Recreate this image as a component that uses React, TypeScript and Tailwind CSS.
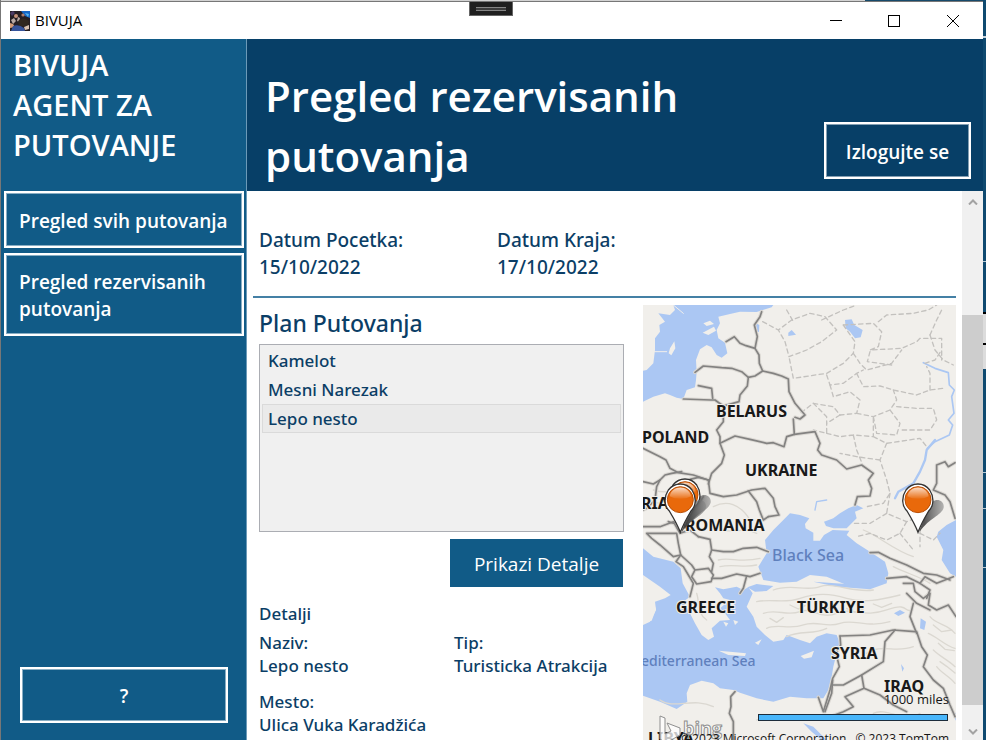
import { useState } from "react";

const stops = ["Kamelot", "Mesni Narezak", "Lepo nesto"];

const borders = [
  "M365 35L360 50 343 75 352 110 345 145 357 165 358 190 368 213",
  "M258 125L283 110 300 130 318 137 345 145",
  "M165 217L190 198 245 203 275 205 305 215 325 232 345 228 368 213 400 220 425 228 445 237 447 275 465 310 495 345 480 357 465 352",
  "M325 232L322 258 300 285 297 305 250 318 225 300 213 300 130 297",
  "M175 257L215 265 218 295",
  "M250 320L250 365 230 390 240 410 240 430 285 408 330 418 380 430 400 428 432 440 440 410 463 403 460 357",
  "M463 403L525 395 540 430 533 450 545 465 590 480 620 507 665 495 700 520 685 540 695 565 690 588 652 590 645 615",
  "M240 430L253 465 245 490 215 520 205 552",
  "M9 445L60 470 78 480 90 505 115 518 160 525 205 540",
  "M9 545L40 552 60 540 75 525 95 520 125 515",
  "M60 540L50 560 45 600 20 625 9 630",
  "M205 540L210 580 250 590 290 585 335 570 375 565 400 595 405 620 417 645 385 650",
  "M325 573L350 605 358 630 370 660 385 650",
  "M190 590L170 620 150 645 100 670 85 665",
  "M205 540L175 532 150 538",
  "M20 700L110 700 115 730 122 765 100 770 60 735 35 715Z",
  "M9 680L60 680 100 665 120 700 150 690 175 710",
  "M175 710L210 718 215 750 250 755 280 755 310 745 350 742 385 755",
  "M215 750L208 770 220 790 215 815",
  "M122 765L155 795 165 810 205 805 220 825 213 845 170 852 155 830 165 810",
  "M122 765L108 785 130 800 145 825 160 850 150 890",
  "M215 835L245 835 290 822 330 830 360 820",
  "M320 828L310 865 300 880",
  "M690 758L715 757 750 775 800 795 850 820 890 825 930 840",
  "M740 835L800 830 840 850 870 870 860 895",
  "M840 850L855 830 890 850 915 840 940 830",
  "M945 488L925 500 915 485 890 495 890 550 880 570 915 585 930 605 945 655",
  "M790 850L820 850 825 875 850 895 870 880 865 915 890 930 925 915 948 950",
  "M800 880L830 910 870 930",
  "M820 910L810 950 830 1000",
  "M600 1008L690 1005 760 990 825 995",
  "M765 990L735 1025 730 1085 665 1125 610 1155 580 1155",
  "M830 995L845 1040 862 1065 850 1100 880 1140 910 1165 930 1215 945 1250",
  "M665 1125L672 1165 615 1190 640 1220 610 1235 570 1250",
  "M672 1165L720 1185 760 1215 800 1235",
  "M600 1008L602 1035 588 1060 598 1100 578 1135 570 1170 550 1235 535 1192",
  "M578 1140L575 1180 555 1235",
  "M285 1175L272 1190 273 1220 268 1240 280 1265 280 1320",
];

const regions = [
  "M368 65L415 90 455 60 510 40 555 50 590 90 545 125 500 150 447 170 435 125 415 90",
  "M440 30L460 65M545 60L610 30 650 15M610 75L700 70 725 95 715 140 690 150 785 145 830 125 840 115 905 115 905 180",
  "M610 75L645 125 640 160 610 190 560 220 460 235 447 170",
  "M715 65L740 45 820 40 865 30 890 15M870 105L890 60 905 30",
  "M640 160L660 190 680 210 755 190 785 150M690 155L682 185 755 195",
  "M560 225L570 255 610 250 650 220 670 210M650 220L670 260 720 258 760 270 830 285 870 270 910 265",
  "M855 190L885 180 905 150M870 105L885 150 910 180 940 195M870 270L870 220 860 200",
  "M570 255L580 290 630 275 660 300 650 340 600 345 580 320 520 310 480 340",
  "M520 310L560 350 560 400 520 390M600 345L560 370M650 340L700 350 750 330 770 300 760 270",
  "M700 350L710 400 770 405 780 370 750 330M770 320L830 325 880 325 890 360 870 390 780 390",
  "M560 400L600 410 640 405 700 410 700 350M640 405L650 450 670 500M700 410L740 430 840 415 860 440",
  "M740 430L720 480 740 540 750 580 730 610 680 620M720 480L650 470 600 460",
  "M750 580L740 640 800 665 840 650 840 740M740 640L690 670 640 670",
  "M800 665L780 700 740 720 690 700 650 710M840 700L880 720 900 700M780 700L820 750",
];

const ridges = [
  "M370 940C410 925 440 950 480 935S540 960 590 940 670 955 740 930 790 940 815 930",
  "M350 905C400 895 430 912 480 895S570 880 620 895 720 900 780 885",
  "M380 985C410 970 450 990 490 975S560 985 600 970 680 985 750 965",
  "M440 1010C480 990 520 1005 560 985",
  "M400 870C450 850 500 875 540 860S640 880 700 870",
  "M390 955l20 12 20-14M450 915l25 12 20-10M540 915l20 12 30-12M620 925l25 12 25-10M700 912l25 10 30-12",
  "M870 950C890 975 920 970 945 1000M865 1000C890 1010 920 1040 945 1045M880 1050C900 1070 925 1080 945 1100M890 1100C905 1120 930 1130 945 1150",
  "M880 975l25 20 30-5M895 1030l20 18 28 4M900 1085l20 14 25 20",
  "M235 780C270 770 300 790 360 775M240 800C280 790 310 805 350 795M220 620C260 600 300 610 330 660M240 690C280 700 310 680 350 700",
  "M30 600C60 620 90 600 120 640M40 570C70 580 95 575 130 570M760 800C800 820 840 830 870 850M670 690C720 710 760 750 820 770",
  "M170 880C180 910 170 940 200 960M60 1200C100 1230 160 1190 220 1220M350 1260C420 1230 500 1270 560 1250",
  "M680 1060C720 1030 770 1060 820 1040M700 1240C740 1220 790 1270 840 1240",
];

function Pin({ x, y }: { x: number; y: number }) {
  return (
    <g transform={`translate(${x} ${y})`}>
      <path d="M5 -8C20 -45 32 -70 44 -92C60 -104 80 -92 77 -74C70 -50 36 -45 5 -2Z" fill="url(#pinShadow)" />
      <path
        d="M0 0C-8 -22 -18 -39 -33 -64C-49 -79 -50 -106 -36 -127C-17 -151 17 -151 35 -127C49 -106 48 -79 32 -64C17 -39 8 -22 0 0Z"
        fill="#fff"
        stroke="#333"
        strokeWidth="4"
      />
      <circle cx="0" cy="-98" r="39" fill="#e9690b" stroke="#b94e06" strokeWidth="3" />
      <path d="M-32 -108C-26 -143 26 -143 32 -108C16 -98 -16 -98 -32 -108Z" fill="url(#pinGloss)" />
    </g>
  );
}

function TripMap() {
  return (
    <svg
      viewBox="0 0 313 435"
      preserveAspectRatio="xMinYMin slice"
      className="block h-full w-full"
      role="img"
      aria-label="Mapa putovanja"
    >
      <defs>
        <linearGradient id="pinGloss" x1="0" y1="0" x2="0" y2="1">
          <stop offset="0" stopColor="#fff" stopOpacity="0.75" />
          <stop offset="1" stopColor="#fff" stopOpacity="0.05" />
        </linearGradient>
        <linearGradient id="pinShadow" x1="0" y1="0" x2="1" y2="0">
          <stop offset="0.2" stopColor="#444" stopOpacity="0.9" />
          <stop offset="1" stopColor="#888" stopOpacity="0.6" />
        </linearGradient>
      </defs>
      <rect width="313" height="435" fill="#f1efeb" />
      <g transform="scale(0.33333) translate(-9 -15)" strokeLinejoin="round" strokeLinecap="round" fill="none">
        <g fill="#abc7f3">
          <path d="M100 15L105 30 90 45 55 40 75 65 58 75 60 95 45 115 45 150 40 190 20 210 9 212 9 305 40 290 75 280 90 285 110 293 130 297 140 270 165 262 168 240 170 215 168 180 180 148 200 135 215 142 230 165 245 173 262 160 255 128 235 115 230 90 240 70 235 50 270 42 300 35 350 36 395 22 400 15Z" />
          <path d="M348 70L358 75 357 95 348 98Z" />
          <path d="M615 60L635 58 643 75 668 90 662 112 645 115 630 95 617 85Z" />
          <path d="M445 98L455 90 468 104 445 108Z" />
          <path d="M375 720L400 690 430 660 450 640 480 645 508 655 495 672 497 685 520 698 520 722 540 722 552 705 578 690 628 692 620 705 650 730 690 755 735 785 745 820 740 850 690 860 620 855 560 830 510 825 470 845 420 848 370 840 355 800 380 760Z" />
          <path d="M552 665L580 655 600 640 625 625 650 615 670 625 645 635 650 655 620 685 580 685 558 678Z" />
          <path d="M948 660L920 675 895 695 890 710 910 750 905 780 930 820 948 830Z" />
          <path d="M9 745L40 770 100 785 122 805 128 850 150 890 130 905 150 940 165 970 185 1005 205 1020 222 1010 215 985 240 962 270 960 255 940 240 925 270 900 250 895 240 880 225 862 250 868 290 860 310 870 325 862 338 880 320 920 340 950 350 980 375 1005 400 1025 430 1020 440 1005 480 1020 510 1030 530 1010 560 1000 590 1005 600 1030 590 1060 580 1100 575 1130 565 1170 550 1195 535 1195 500 1195 450 1190 400 1205 350 1195 300 1178 280 1170 240 1165 220 1150 185 1142 150 1155 140 1180 142 1205 110 1227 60 1205 9 1187 9 975 30 965 48 930 45 905 75 895 92 885 60 860 9 825Z" />
          <path d="M322 862L350 852 400 858 380 873 345 875ZM520 845L620 852 740 850 690 868 590 860Z" />
          <path d="M762 940L780 930 795 938 775 948ZM842 955L858 965 853 990 840 985ZM783 1092L792 1105 787 1115ZM930 1228L948 1240 948 1262ZM490 1270L520 1280 560 1320 545 1320 515 1295Z" />
        </g>
        <g fill="#f1efeb">
          <path d="M190 70L210 62 222 72 200 78ZM188 98L222 80 228 92 205 105ZM90 145L103 124 106 145 94 166 86 160Z" />
          <path d="M236 1052L270 1055 318 1060 315 1068 265 1065ZM482 1068L522 1052 515 1072 492 1076ZM345 1028L365 1018 355 1035ZM250 965L265 970 258 980ZM15 965L42 910 48 928 35 962Z" />
          <path d="M270 905L285 915 275 920ZM280 960L295 965 285 975Z" />
        </g>
        <g stroke="#abc7f3" strokeWidth="5">
          <path d="M850 188L885 205 925 218M925 218L928 255 943 270 935 290 942 340 925 360 938 375 928 405 885 425 862 445" />
          <path d="M885 420L860 450 855 480 840 515 820 550 775 575 765 595" strokeWidth="7" />
          <path d="M525 630L530 605 560 600" strokeWidth="4" />
          <path d="M40 155L80 155M100 15L130 40" stroke="#f1efeb" strokeWidth="3" />
        </g>
        <g stroke="#dbd8d1" strokeWidth="4">
          {ridges.map((d) => (
            <path key={d} d={d} />
          ))}
        </g>
        <g stroke="#c3c1be" strokeWidth="4" strokeDasharray="13 10">
          {regions.map((d) => (
            <path key={d} d={d} />
          ))}
        </g>
        <g stroke="#dbd8d3" strokeWidth="11">
          {borders.map((d) => (
            <path key={d} d={d} />
          ))}
        </g>
        <g stroke="#838281" strokeWidth="5">
          {borders.map((d) => (
            <path key={d} d={d} />
          ))}
        </g>
      </g>
      <g
        className="font-['Noto_Sans',sans-serif] text-[16px] font-bold"
        fill="#191919"
        stroke="#f1efeb"
        strokeWidth="2"
        paintOrder="stroke"
      >
        <text x="73" y="112">BELARUS</text>
        <text x="-1" y="138">POLAND</text>
        <text x="102" y="171">UKRAINE</text>
        <text x="-2" y="204">RIA</text>
        <text x="42" y="226">ROMANIA</text>
        <text x="33" y="308">GREECE</text>
        <text x="154" y="308">TÜRKIYE</text>
        <text x="188" y="354">SYRIA</text>
        <text x="241" y="387">IRAQ</text>
        <text x="5" y="439">LIBYA</text>
      </g>
      <g className="font-['Noto_Sans',sans-serif] font-medium" fill="#5f80bd">
        <text x="129" y="256" className="text-[16px]">Black Sea</text>
        <text x="-2" y="361" className="text-[14px]">editerranean Sea</text>
      </g>
      <g fill="#ffffff" fillOpacity="0.75" stroke="#8f8f8f" strokeWidth="1">
        <path d="M17 411L22 413V429L28 426L24 418L37 423V430L23 438L17 434Z" />
        <text x="40" y="430" className="font-['Open_Sans',sans-serif] text-[18px] font-bold">bing</text>
      </g>
      <g transform="scale(0.33333) translate(-9 -15)">
        <Pin x={135} y={682} />
        <Pin x={121} y={697} />
        <Pin x={834} y={697} />
      </g>
      <g className="font-['Open_Sans',sans-serif] text-[13px]" fill="#161616">
        <text x="306" y="399" textAnchor="end">1000 miles</text>
        <text x="36" y="438" className="text-[12px]">© 2023 Microsoft Corporation</text>
        <text x="306" y="438" textAnchor="end" className="text-[12px]">© 2023 TomTom</text>
      </g>
      <rect x="115.5" y="409.500" width="189" height="6" fill="#49b6fb" stroke="#1d2c3a" />
    </svg>
  );
}

function AppIcon() {
  return (
    <svg viewBox="0 0 20 20" className="h-5 w-5" aria-hidden="true">
      <rect width="20" height="20" fill="#251e22" />
      <path d="M11 0h9v7l-5-2z" fill="#1766c4" />
      <path d="M15 2l4 1-1 3z" fill="#58b8f0" />
      <path d="M0 2l3-2 2 2-3 3z" fill="#4b3a64" />
      <circle cx="6" cy="5" r="2" fill="#c59178" />
      <circle cx="13" cy="4" r="1.6" fill="#b17d69" />
      <path d="M1 9l3-2 2 3-3 3zM8 6l2 1-1 4-2-1z" fill="#b9aaa3" />
      <path d="M8 10q5-5 11 0l-1 5H9z" fill="#30271f" />
      <path d="M0 12l3 1 2 3-5 1z" fill="#d39b77" />
      <path d="M3 15q6-2 11 2l1 3H1z" fill="#36549b" />
      <path d="M14 16l5-2v4l-4 1z" fill="#d8c1b0" />
    </svg>
  );
}

const outlined =
  "border-2 border-white font-semibold text-white outline-1 -outline-offset-3 outline-white/50";

function Field({ label, value }: { label: string; value: string }) {
  return (
    <div>
      <dt>{label}</dt>
      <dd>{value}</dd>
    </div>
  );
}

export default function App() {
  const [selected, setSelected] = useState(2);

  return (
    <div className="flex h-screen overflow-hidden bg-[#0f4a70] font-['Open_Sans','Noto_Sans',sans-serif] text-[#0b3e66]">
      <div className="flex min-w-0 flex-1 flex-col border-l border-[#777777]">
        <div className="flex h-[2px] shrink-0 border-b border-[#777777] bg-[#d2d2d2]">
          <div className="ml-auto h-px w-[118px] bg-[#164a6b]" />
        </div>
        <div className="relative flex h-[37px] shrink-0 items-center bg-white pl-[9px] text-black">
          <AppIcon />
          <span className="ml-[5px] text-[15px]">BIVUJA</span>
          <div className="absolute top-0 left-1/2 flex h-[14px] w-11 -translate-x-[23px] items-center justify-center border border-t-0 border-[#666666] bg-[#1f1f1f]">
            <div className="h-1 w-[30px] border-y border-[#858585] bg-[#3c3c3c]" />
          </div>
          <div className="ml-auto flex h-full">
            <button aria-label="Minimize" className="flex w-[58px] items-center justify-center">
              <svg viewBox="0 0 12 12" className="h-3 w-3" stroke="#000" shapeRendering="crispEdges">
                <path d="M0 5.500H12" />
              </svg>
            </button>
            <button aria-label="Maximize" className="flex w-[58px] items-center justify-center">
              <svg viewBox="0 0 12 12" className="h-3 w-3" fill="none" stroke="#000" shapeRendering="crispEdges">
                <rect x="0.5" y="0.5" width="11" height="11" />
              </svg>
            </button>
            <button aria-label="Close" className="flex w-[60px] items-center justify-center">
              <svg viewBox="0 0 12 12" className="h-3 w-3" stroke="#000">
                <path d="M0 0L12 12M12 0L0 12" />
              </svg>
            </button>
          </div>
        </div>

        <div className="flex min-h-0 flex-1">
          <aside className="flex w-[246px] shrink-0 flex-col border-r border-[#6c9ab8] bg-[#115b87]">
            <div className="h-[152px] shrink-0 px-3 pt-1.5 text-[29px] leading-10 font-semibold text-white">
              BIVUJA
              <br />
              AGENT ZA
              <br />
              PUTOVANJE
            </div>
            <nav className="flex flex-col gap-[5px] pr-0.5 pl-[3px]">
              <button className={`${outlined} px-[13px] pt-[15px] pb-[11px] text-left text-[19px] leading-[27px] whitespace-nowrap`}>
                Pregled svih putovanja
              </button>
              <button className={`${outlined} px-[13px] pt-[14px] pb-[11px] text-left text-[19px] leading-[27px]`}>
                Pregled rezervisanih putovanja
              </button>
            </nav>
            <button className={`${outlined} mx-[18px] mt-auto mb-[17px] ml-[19px] h-14 pt-0.5 text-[19px]`}>?</button>
          </aside>

          <div className="flex min-w-0 flex-1 flex-col bg-white">
            <header className="flex h-[152px] shrink-0 items-end justify-between bg-[#073f67] pr-3 pb-3 pl-[18px] text-white">
              <h1 className="-mb-[7px] max-w-[440px] text-[42px] leading-[60px] font-semibold">
                Pregled rezervisanih putovanja
              </h1>
              <button className={`${outlined} h-[57px] w-[147px] pt-1 text-[19px]`}>Izlogujte se</button>
            </header>

            <div className="flex min-h-0 flex-1">
              <main className="flex min-w-0 flex-1 flex-col overflow-hidden px-1.5 font-['Noto_Sans',sans-serif]">
                <dl className="flex shrink-0 border-b-2 border-[#4480a5] pt-9 pb-[15px] pl-1.5 text-[19px] leading-[27px] font-medium">
                  <div className="w-[238px]">
                    <Field label="Datum Pocetka:" value="15/10/2022" />
                  </div>
                  <Field label="Datum Kraja:" value="17/10/2022" />
                </dl>

                <div className="flex min-h-0 flex-1">
                  <section className="w-[384px] shrink-0 pr-[13px] pl-1.5">
                    <h2 className="pt-2 pb-1 text-[23px] leading-[34px] font-medium">Plan Putovanja</h2>
                    <ul
                      role="listbox"
                      aria-label="Plan Putovanja"
                      className="h-[188px] border border-[#abadb3] bg-[#f0f0f0] px-0.5 pt-px text-[17px] leading-[27px] font-medium"
                    >
                      {stops.map((stop, i) => (
                        <li
                          key={stop}
                          role="option"
                          tabIndex={0}
                          aria-selected={i === selected}
                          onClick={() => setSelected(i)}
                          className={`border px-[5px] ${i === selected ? "border-[#dadada] bg-[#eaeaea]" : "border-transparent"}`}
                        >
                          {stop}
                        </li>
                      ))}
                    </ul>
                    <button className="mt-[7px] mr-px ml-auto block h-12 w-[173px] bg-[#115b87] pt-0.5 font-['Open_Sans',sans-serif] text-[19px] text-white">
                      Prikazi Detalje
                    </button>
                    <h3 className="mt-[15px] mb-1.5 text-[17px] leading-[23px] font-medium">Detalji</h3>
                    <dl className="grid grid-cols-[195px_1fr] gap-y-[13px] text-[17px] leading-[23px] font-medium whitespace-nowrap">
                      <Field label="Naziv:" value="Lepo nesto" />
                      <Field label="Tip:" value="Turisticka Atrakcija" />
                      <Field label="Mesto:" value="Ulica Vuka Karadžića" />
                    </dl>
                  </section>
                  <section className="mt-[7px] ml-1.5 min-w-0 flex-1">
                    <TripMap />
                  </section>
                </div>
              </main>

              <div className="flex w-[21px] shrink-0 flex-col bg-[#f0f0f0]">
                <button aria-label="Scroll up" className="flex h-[21px] items-center justify-center">
                  <svg viewBox="0 0 10 6" className="h-1.5 w-2.5" fill="none" stroke="#a3a3a3" strokeWidth="2">
                    <path d="M1 5.500L5 1.500L9 5.500" />
                  </svg>
                </button>
                <div className="flex flex-1 flex-col">
                  <div className="h-[103px]" />
                  <div className="flex-1 bg-[#cdcdcd]" />
                  <div className="h-[18px]" />
                </div>
                <button aria-label="Scroll down" className="flex h-[17px] items-center justify-center">
                  <svg viewBox="0 0 10 6" className="h-1.5 w-2.5" fill="none" stroke="#a3a3a3" strokeWidth="2">
                    <path d="M1 0.500L5 4.500L9 0.500" />
                  </svg>
                </button>
              </div>
            </div>
          </div>
        </div>
      </div>

      <div className="flex w-[3px] shrink-0 flex-col">
        <div className="h-9" />
        <div className="h-0.5 bg-[#c6d3dc]" />
        <div className="h-[223px]" />
        <div className="h-px bg-[#b8c8d3]" />
        <div className="h-[50px]" />
        <div className="h-[33px] border-y-2 border-black bg-[#dcdcdc]" />
        <div className="h-6 bg-[#dcdcdc]" />
        <div className="h-[103px]" />
        <div className="h-px bg-[#b8c8d3]" />
        <div className="h-[35px]" />
        <div className="h-px bg-[#b8c8d3]" />
        <div className="h-[58px]" />
        <div className="h-px bg-[#b8c8d3]" />
      </div>
    </div>
  );
}
